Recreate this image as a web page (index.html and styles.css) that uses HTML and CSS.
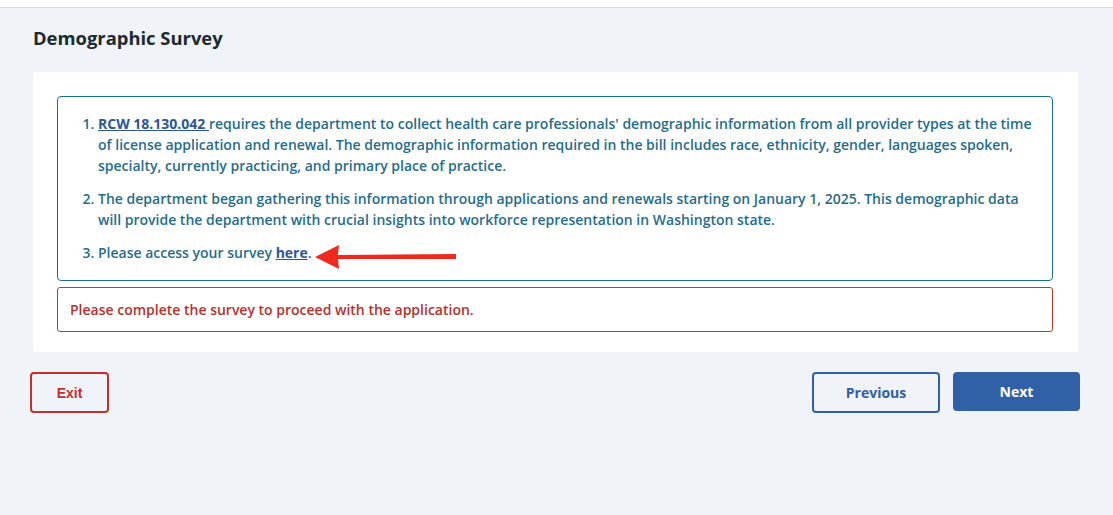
FILE: index.html
```html
<!DOCTYPE html>
<html lang="en">
<head>
<meta charset="utf-8">
<title>Demographic Survey</title>
<link rel="stylesheet" href="styles.css">
</head>
<body>
<div class="topbar"></div>
<main class="page">
  <h1 class="title">Demographic Survey</h1>
  <section class="panel">
    <div class="info">
      <ol class="info-list">
        <li><a class="link" href="#">RCW 18.130.042 </a>requires the department to collect health care professionals' demographic information from all provider types at the time of license application and renewal. The demographic information required in the bill includes race, ethnicity, gender, languages spoken, specialty, currently practicing, and primary place of practice.</li>
        <li>The department began gathering this information through applications and renewals starting on January 1, 2025. This demographic data will provide the department with crucial insights into workforce representation in Washington state.</li>
        <li>Please access your survey <a class="link" href="#">here</a>.<span class="arrow-anchor"><svg class="arrow" width="146" height="30" viewBox="0 0 146 30"><path d="M3 15 L27 3 L26 13 L144 12 L144 17 L26 17 L27 27 Z" fill="#ee2a1f"/></svg></span></li>
      </ol>
    </div>
    <div class="error">Please complete the survey to proceed with the application.</div>
  </section>
  <div class="actions">
    <button class="btn btn-exit" type="button">Exit</button>
    <div class="nav">
      <button class="btn btn-prev" type="button">Previous</button>
      <button class="btn btn-next" type="button">Next</button>
    </div>
  </div>
</main>
</body>
</html>
```
FILE: styles.css
```css
html, body {
  margin: 0;
  padding: 0;
}
body {
  background: #f0f4f8;
  font-family: "Open Sans", "Liberation Sans", sans-serif;
  height: 515px;
  overflow: hidden;
}
.topbar {
  height: 7px;
  background: #ffffff;
  border-bottom: 1px solid #d8d8d8;
}
.title {
  margin: 0;
  padding: 18px 0 0 33px;
  height: 44px;
  box-sizing: border-box;
  font-size: 18.4px;
  line-height: 24px;
  font-weight: 700;
  color: #1b2a33;
}
.panel {
  margin: 20px 35px 0 33px;
  background: #ffffff;
  padding: 24px 25px 20px 24px;
}
.info {
  border: 1px solid #1a6f8e;
  border-radius: 4px;
  padding: 16px 14px 17px 23px;
}
.info-list {
  margin: 0;
  padding-left: 17px;
  color: #1f6d8c;
  font-size: 14px;
  line-height: 21px;
  font-weight: 600;
}
.info-list li {
  margin-bottom: 12px;
}
.info-list li:last-child {
  margin-bottom: 0;
}
.link {
  color: #2b5797;
  font-weight: 700;
  text-decoration: underline;
}
.arrow-anchor {
  position: relative;
  display: inline-block;
  width: 0;
  height: 0;
}
.arrow {
  position: absolute;
  left: 0;
  top: -16px;
}
.error {
  margin-top: 6px;
  border: 1px solid #c0392b;
  border-radius: 3px;
  padding: 11px 12px;
  color: #b8302c;
  font-size: 14px;
  line-height: 21px;
  font-weight: 600;
}
.actions {
  display: flex;
  justify-content: space-between;
  align-items: flex-start;
  padding: 20px 33px 0 30px;
}
.nav {
  display: flex;
  gap: 13px;
  align-items: flex-start;
}
.btn {
  box-sizing: border-box;
  border-radius: 4px;
  font-size: 14px;
  font-weight: 700;
  cursor: pointer;
  padding: 0;
}
.btn-exit {
  width: 79px;
  height: 41px;
  border: 2px solid #c0312f;
  background: transparent;
  color: #c0312f;
  font-family: "Liberation Sans", Arial, sans-serif;
}
.btn-prev {
  width: 128px;
  height: 41px;
  border: 2px solid #2f5fa5;
  background: transparent;
  color: #2f5fa5;
  font-family: "Open Sans", sans-serif;
}
.btn-next {
  width: 127px;
  height: 39px;
  border: none;
  background: #3061a6;
  color: #ffffff;
  font-family: "Open Sans", sans-serif;
}
```
